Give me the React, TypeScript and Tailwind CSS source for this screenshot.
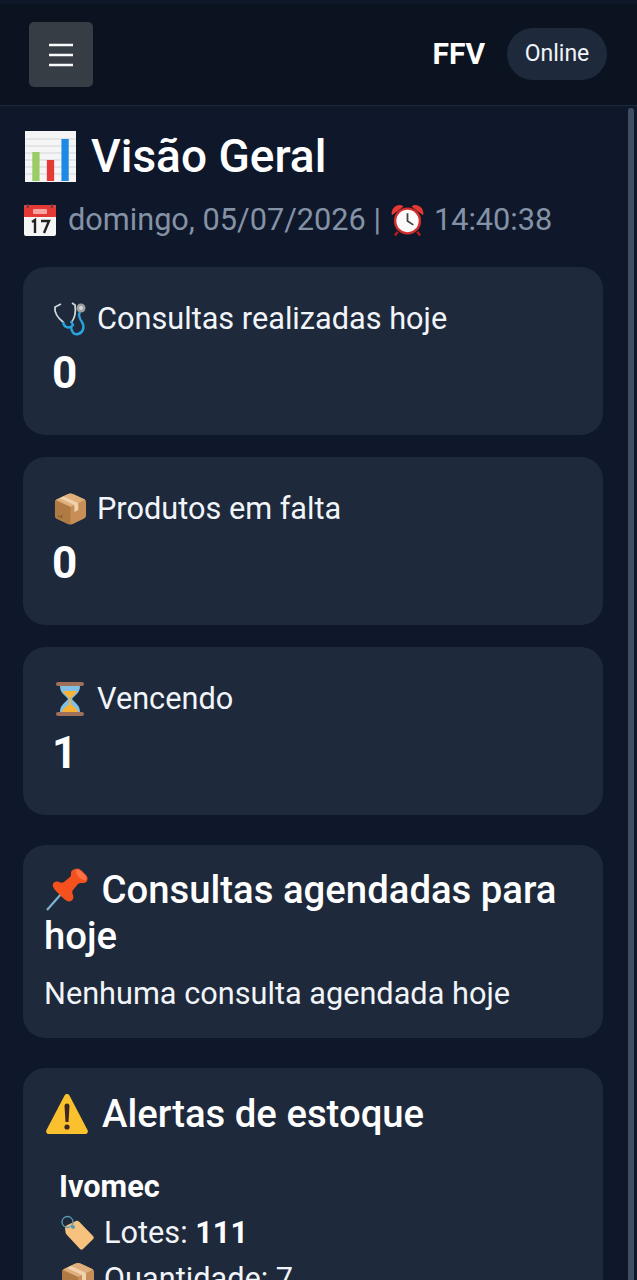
const font = { fontFamily: "Roboto, sans-serif" };

// ─── Emoji drawings ──────────────────────────────────────────────────────────

function ChartEmoji() {
  return (
    <svg viewBox="0 0 42 51" className="ml-[2px] h-[51px] w-[51px] shrink-0" preserveAspectRatio="none">
      <rect width="42" height="51" fill="#f5f5f5" />
      <path d="M0 8h42M0 15h42M0 22h42M0 29h42M0 36h42M0 43h42" stroke="#cfd8dc" strokeWidth="1" />
      <rect x="6" y="21" width="6" height="29" fill="#9ccc65" />
      <rect x="18" y="29" width="6" height="21" fill="#e53935" />
      <rect x="30" y="8" width="6" height="42" fill="#1e88e5" />
    </svg>
  );
}

function CalendarEmoji() {
  return (
    <svg viewBox="0 0 32 32" className="ml-[1px] h-[32px] w-[32px] shrink-0">
      <rect y="1" width="32" height="31" rx="2" fill="#f5f5f5" />
      <path d="M0 3a2 2 0 0 1 2-2h28a2 2 0 0 1 2 2v10H0z" fill="#e53935" />
      <rect x="3" y="0" width="1.600" height="4" fill="#444" />
      <rect x="27" y="0" width="1.600" height="4" fill="#444" />
      <rect x="9" y="5" width="14" height="5" rx="1" fill="#f6a5a0" />
      <path d="M8 18l3-2v13M17 17h8l-5 12" stroke="#212121" strokeWidth="2.400" fill="none" />
    </svg>
  );
}

function ClockEmoji() {
  return (
    <svg viewBox="0 0 34 34" className="-ml-[1px] h-[34px] w-[33px] shrink-0">
      <path d="M7 29l-3 4M27 29l3 4" stroke="#b71c1c" strokeWidth="2.500" />
      <path d="M1 12a8 8 0 0 1 12-9zM33 12a8 8 0 0 0-12-9z" fill="#e53935" />
      <circle cx="17" cy="18" r="14" fill="#d32f2f" />
      <circle cx="17" cy="18" r="11.500" fill="#fafafa" />
      <path d="M17 10v8l6 4" stroke="#424242" strokeWidth="1.800" fill="none" />
    </svg>
  );
}

function StethoscopeEmoji() {
  return (
    <svg viewBox="0 0 36 36" className="h-[36px] w-[36px] shrink-0" fill="none">
      <path d="M9 3L3 6c-1 6 4 12 9 16" stroke="#cfd8dc" strokeWidth="1.800" />
      <path d="M20 2l3 2c1 6 0 13-4 18" stroke="#cfd8dc" strokeWidth="1.800" />
      <path d="M11 21c1 6 7 7 10 3l-2-4" stroke="#29a3dc" strokeWidth="2.400" />
      <path d="M28 11c-2 3-1 6 2 10 3 5 1 11-4 12-4 1-7-2-7-8" stroke="#29a3dc" strokeWidth="2.400" />
      <circle cx="29" cy="7" r="4.500" fill="#9e9e9e" />
      <circle cx="29" cy="7" r="2" fill="#cfd8dc" />
    </svg>
  );
}

function PackageEmoji({ className }: { className: string }) {
  return (
    <svg viewBox="0 0 34 34" className={className}>
      <path d="M17 1c1 0 2 .3 3 .8l11 5c1 .5 2 1.500 2 3v14c0 1.500-1 2.500-2 3l-11 5.500c-2 1-4 1-6 0L3 27c-1-.5-2-1.500-2-3V10c0-1.500 1-2.500 2-3l11-5.200c1-.5 2-.8 3-.8z" fill="#c78f57" />
      <path d="M17 1c1 0 2 .3 3 .8l12 5.700L17 15 2 7.500 14 1.800c1-.5 2-.8 3-.8z" fill="#e0b07c" />
      <path d="M17 15v18c-1 0-2-.2-3-.7L3 27c-1-.5-2-1.500-2-3V8z" fill="#b07a45" />
      <path d="M10 4l15 7v7l-4 2v-7L6 6z" fill="#f0d2ac" />
      <path d="M4 24l3 1.500M8 23v3" stroke="#7a4f28" strokeWidth="1" />
    </svg>
  );
}

function HourglassEmoji() {
  return (
    <svg viewBox="0 0 36 36" className="h-[36px] w-[36px] shrink-0">
      <rect x="4" y="1" width="28" height="4" rx="2" fill="#a1705a" />
      <rect x="4" y="31" width="28" height="4" rx="2" fill="#a1705a" />
      <path d="M8 5h20c0 7-5 9-8 13 3 4 8 6 8 13H8c0-7 5-9 8-13-3-4-8-6-8-13z" fill="#81c0e4" />
      <path d="M11 10h14c-1 3-5 5-7 8-2-3-6-5-7-8z" fill="#f9b233" />
      <path d="M17 18h2v6h-2z" fill="#f9b233" />
      <path d="M10 31c1-4 5-6 8-8 3 2 7 4 8 8z" fill="#f9b233" />
    </svg>
  );
}

function PinEmoji() {
  return (
    <svg viewBox="0 0 44 44" className="ml-[1px] mr-[3px] h-[44px] w-[44px] shrink-0" fill="none">
      <path d="M2 43l15-17" stroke="#7fb2cc" strokeWidth="2.200" />
      <path d="M30 2c2-1 4-1 7 2l3 3c3 3 3 5 2 7-1 2-3 2-5 2-2 0-3 0-4 1l-5 6c-1 1-1 3 0 5 1 3 0 5-2 6-2 1-5 0-8-3l-6-6c-3-3-5-6-4-8 1-2 3-3 6-2 2 1 4 1 5 0l6-5c1-1 1-2 1-4 0-2 1-3 4-4z" fill="#f4511e" />
      <path d="M31 3c2-1 4 0 6 2l2 2c2 2 3 4 2 6-2 1-5-1-7-3s-4-5-3-7z" fill="#ff7043" />
    </svg>
  );
}

function WarningEmoji() {
  return (
    <svg viewBox="0 0 44 44" className="ml-[1px] h-[44px] w-[44px] shrink-0">
      <path d="M22 2c1.200 0 2 .6 2.600 1.700L42.500 38c1 2-.2 4-2.500 4H4c-2.300 0-3.500-2-2.500-4L19.400 3.700C20 2.600 20.800 2 22 2z" fill="#fbc02d" />
      <path d="M19.500 14a2.500 2.500 0 0 1 5 0l-1 16h-3z" fill="#3e2723" />
      <circle cx="22" cy="35" r="2.600" fill="#3e2723" />
    </svg>
  );
}

function TagEmoji() {
  return (
    <svg viewBox="0 0 34 36" className="ml-[2px] h-[36px] w-[34px] shrink-0" fill="none">
      <path d="M4 13c0-1 .5-2 1.500-2.500L15 6c1-.4 2-.2 3 .6L32 21c1 1 1 2 .2 3L22 34c-1 1-2 1-3 0L6 20c-1-1-1.500-2-1.500-3z" fill="#f6c27e" />
      <circle cx="6.500" cy="7" r="5.500" stroke="#5b9bb5" strokeWidth="1.300" />
      <circle cx="12" cy="12" r="2" fill="#5b9bb5" />
    </svg>
  );
}

// ─── Cards ───────────────────────────────────────────────────────────────────

function StatCard({
  icon,
  label,
  value,
}: {
  icon: React.ReactNode;
  label: string;
  value: string;
}) {
  return (
    <div className="h-[168px] rounded-[22px] bg-[#1e293b] pl-[29px] pt-[33px]">
      <div className="flex h-[38px] items-center gap-[9px] text-[30.7px] leading-[38px] text-[#f1f5f9]">
        {icon}
        <span>{label}</span>
      </div>
      <div className="mt-[10px] text-[44px] font-bold leading-[50px] text-white">
        {value}
      </div>
    </div>
  );
}

// ─── Page ────────────────────────────────────────────────────────────────────

export default function App() {
  return (
    <div
      className="flex h-[1280px] w-[637px] flex-col overflow-hidden bg-[#0f172a] text-white"
      style={font}
    >
      <div className="h-[4px] shrink-0 bg-[#0f172a]" />
      <header className="flex h-[102px] shrink-0 items-center justify-between border-b border-[#1e293b] bg-[#0b1320] pl-[29px] pr-[30px]">
        <button
          type="button"
          className="flex h-[65px] w-[64px] items-center justify-center rounded-[5px] bg-[#373d45] text-white"
        >
          <svg viewBox="0 0 24 24" className="h-[24px] w-[24px]" fill="none">
            <path d="M0 2h24M0 12h24M0 22h24" stroke="#f8fafc" strokeWidth="2.500" />
          </svg>
        </button>
        <div className="mb-[2px] flex items-center gap-[22px]">
          <span className="text-[30px] font-bold">FFV</span>
          <span className="flex h-[52px] w-[100px] items-center justify-center rounded-full bg-[#1e293b] pt-[2px] text-[23px] text-[#f1f5f9]">
            Online
          </span>
        </div>
      </header>

      <div className="flex min-h-0 flex-1">
        <main className="w-[628px] shrink-0 overflow-hidden pl-[23px] pr-[25px]">
          <div className="mt-[20px] flex h-[60px] items-center gap-[15px]">
            <ChartEmoji />
            <h1 className="text-[46px] font-medium leading-[60px]">Visão Geral</h1>
          </div>
          <p className="mt-[14px] flex h-[40px] items-center gap-[11px] text-[30.7px] leading-[40px] text-[#8492a6]">
            <CalendarEmoji />
            <span className="ml-[1px]">domingo, 05/07/2026 |</span>
            <ClockEmoji />
            <span className="-ml-[1px]">14:40:38</span>
          </p>

          <div className="mt-[27px] flex flex-col gap-[22px]">
            <StatCard icon={<StethoscopeEmoji />} label="Consultas realizadas hoje" value="0" />
            <StatCard
              icon={
                <span className="flex w-[36px] shrink-0 justify-center">
                  <PackageEmoji className="h-[34px] w-[33px]" />
                </span>
              }
              label="Produtos em falta"
              value="0"
            />
            <StatCard icon={<HourglassEmoji />} label="Vencendo" value="1" />
          </div>

          <div className="mt-[30px] flex flex-col gap-[30px]">
            <section className="rounded-[22px] bg-[#1e293b] px-[21px] pb-[24px] pt-[22px]">
              <h2 className="text-[38.3px] font-medium leading-[46px]">
                <span className="inline-flex align-[-8px]">
                  <PinEmoji />
                </span>{" "}
                Consultas agendadas para hoje
              </h2>
              <p className="mt-[15px] text-[30.7px] leading-[40px] text-[#f1f5f9]">
                Nenhuma consulta agendada hoje
              </p>
            </section>

            <section className="rounded-[22px] bg-[#1e293b] px-[21px] pt-[23px]">
              <h2 className="flex items-center gap-[13px] text-[38.3px] font-medium leading-[46px]">
                <WarningEmoji />
                Alertas de estoque
              </h2>
              <div className="mt-[27px] pl-[15px] text-[30.7px] leading-[46px] text-[#f1f5f9]">
                <p className="font-bold text-white">Ivomec</p>
                <p className="flex items-center gap-[9px]">
                  <TagEmoji />
                  <span>
                    Lotes: <b className="font-bold text-white">111</b>
                  </span>
                </p>
                <p className="flex items-center gap-[9px]">
                  <PackageEmoji className="ml-[2px] h-[34px] w-[34px] shrink-0" />
                  <span>Quantidade: 7</span>
                </p>
              </div>
            </section>
          </div>
        </main>

        <div className="mt-[2px] h-full w-[6px] shrink-0 rounded-t-full bg-[#3f4e63]" />
      </div>
    </div>
  );
}
